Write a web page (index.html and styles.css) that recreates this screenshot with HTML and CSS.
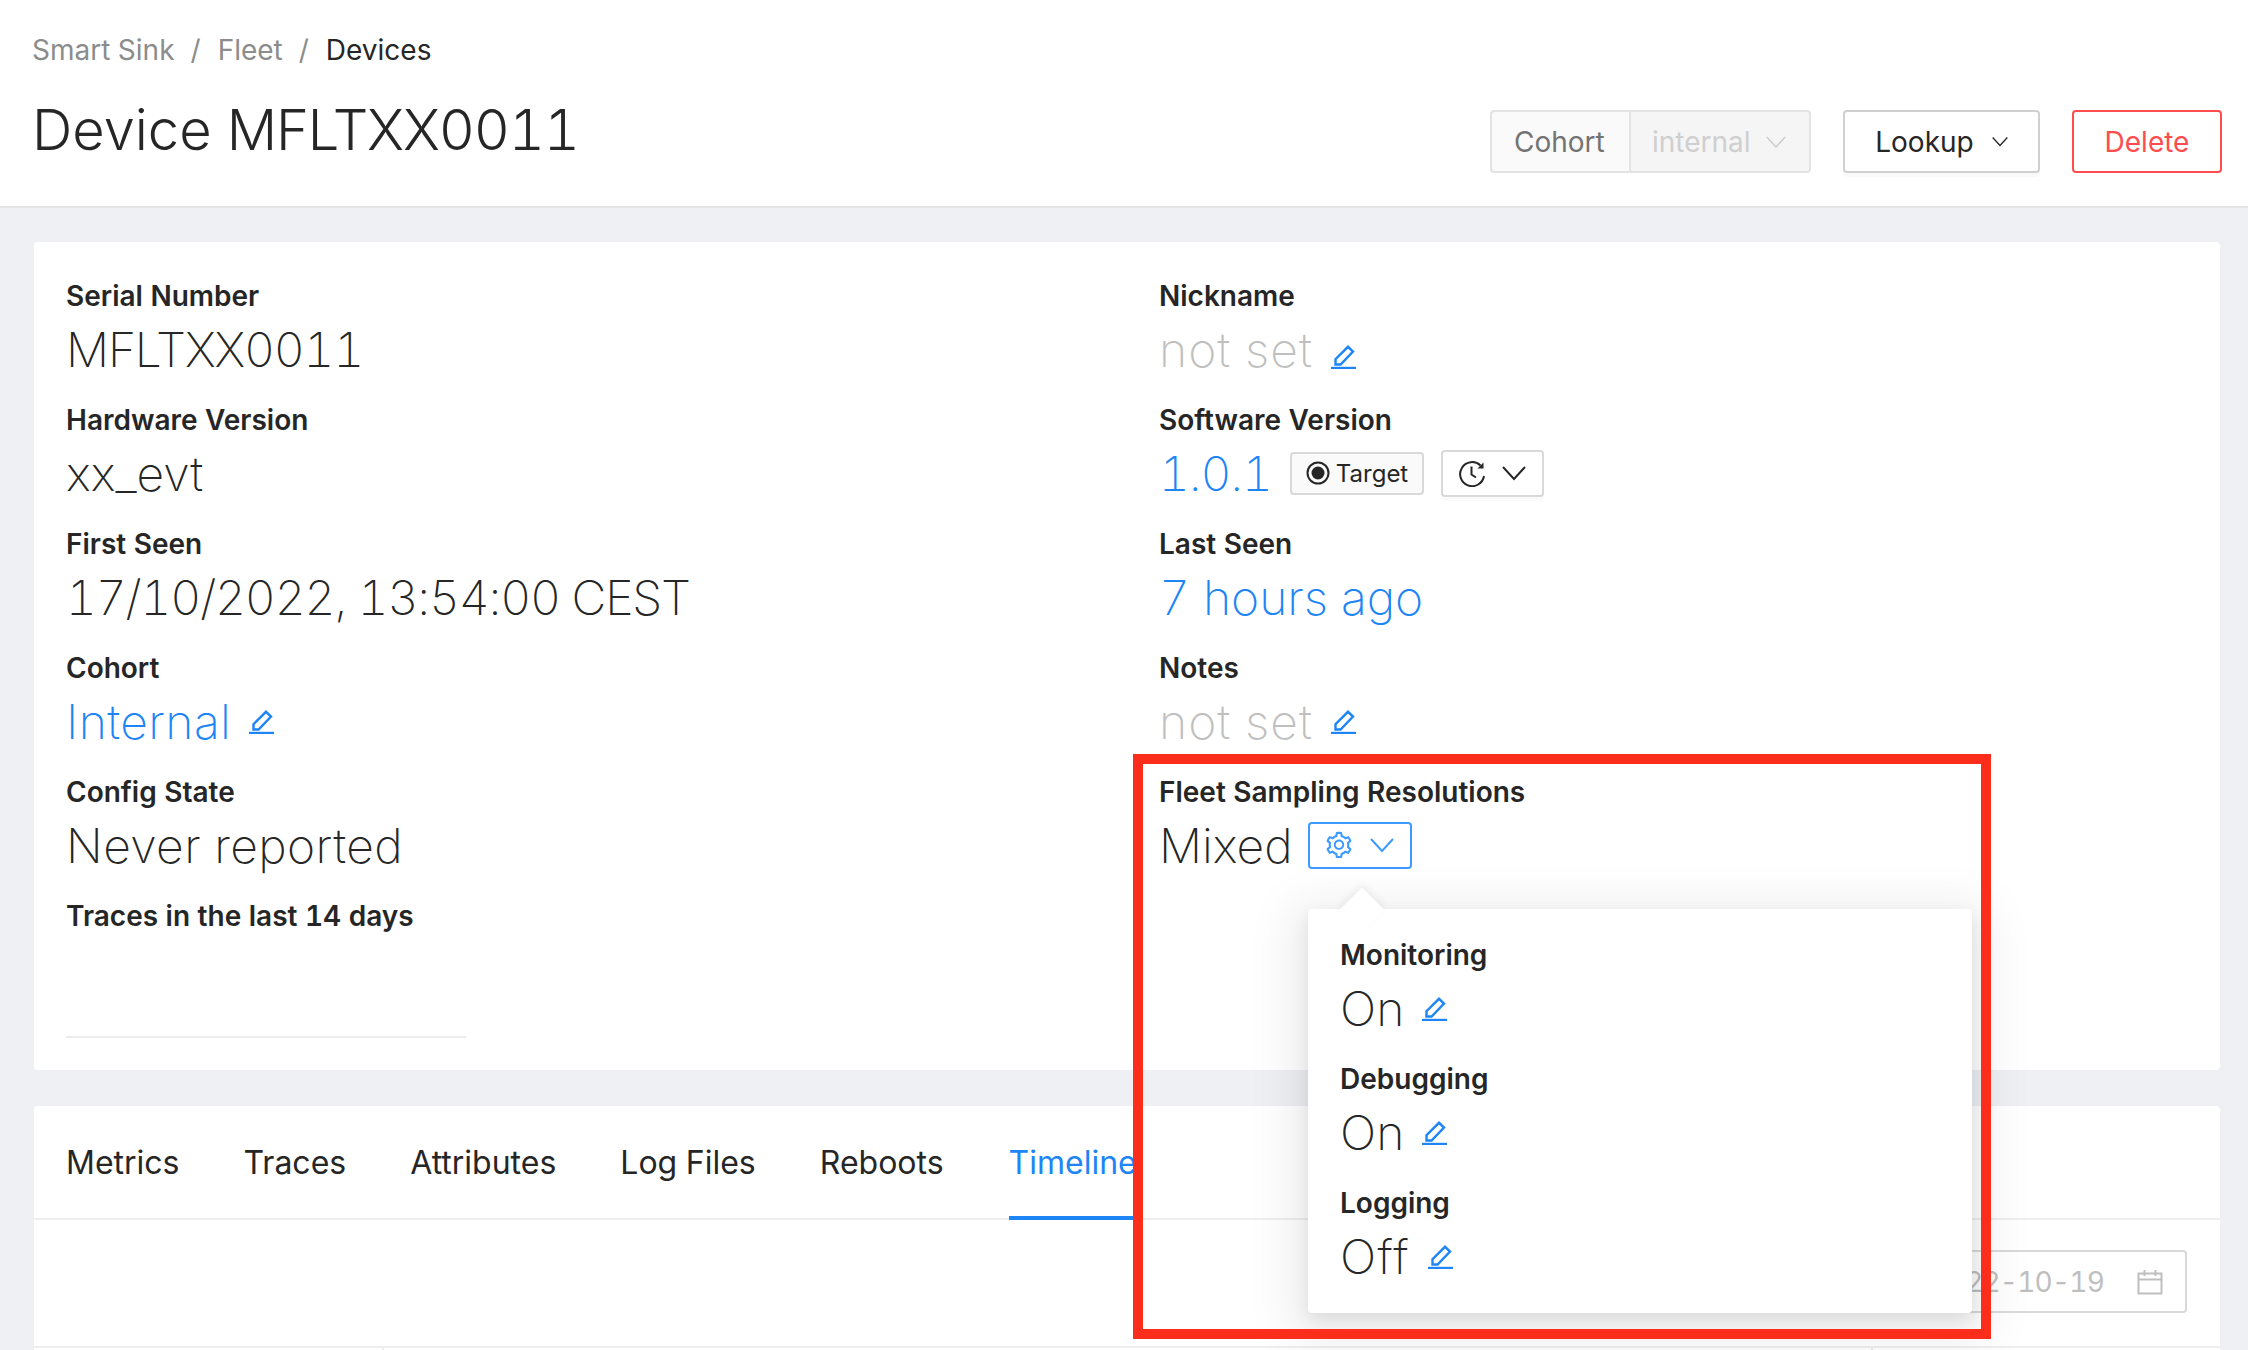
FILE: index.html
```html
<!DOCTYPE html>
<html lang="en">
<head>
    <meta charset="UTF-8">
    <title>Device MFLTXX0011</title>
    <link rel="stylesheet" href="styles.css">
</head>
<body>
    <svg class="icon-defs" width="0" height="0">
        <symbol id="edit" viewBox="0 0 25 24">
            <path d="M4.5 19.5V14.2L17 1.8l5 4.8-12.400 12.900z" fill="none" stroke="currentColor" stroke-width="2.400"/>
            <path d="M0 23h25" fill="none" stroke="currentColor" stroke-width="2.400"/>
        </symbol>
        <symbol id="chevron" viewBox="0 0 24 16">
            <path d="M1 2l11 12L23 2" fill="none" stroke="currentColor" stroke-width="2"/>
        </symbol>
    </svg>

    <header class="page-header">
        <div class="header-left">
            <nav class="breadcrumb">
                <span>Smart Sink</span><i>/</i><span>Fleet</span><i>/</i><span class="current">Devices</span>
            </nav>
            <h1>Device <span class="num">MFLTXX0011</span></h1>
        </div>
        <div class="header-actions">
            <div class="cohort-select">
                <span class="addon">Cohort</span>
                <span class="select-value"><span>internal</span><svg class="chev"><use href="#chevron"/></svg></span>
            </div>
            <button class="btn lookup"><span>Lookup</span><svg class="chev small"><use href="#chevron"/></svg></button>
            <button class="btn delete">Delete</button>
        </div>
    </header>

    <main class="content">
        <section class="card details">
            <div class="field">
                <div class="label">Serial Number</div>
                <div class="value num">MFLTXX0011</div>
            </div>
            <div class="field">
                <div class="label">Nickname</div>
                <div class="value muted"><span>not set</span><svg class="edit low"><use href="#edit"/></svg></div>
            </div>
            <div class="field">
                <div class="label">Hardware Version</div>
                <div class="value">xx_evt</div>
            </div>
            <div class="field">
                <div class="label">Software Version</div>
                <div class="value link"><span class="num">1.0.1</span>
                    <span class="target-tag">
                        <svg width="24" height="24" viewBox="0 0 24 24"><circle cx="12" cy="12" r="10.500" fill="none" stroke="currentColor" stroke-width="2"/><circle cx="12" cy="12" r="6.500" fill="currentColor"/></svg>
                        <span>Target</span>
                    </span>
                    <span class="history-btn">
                        <svg width="28" height="28" viewBox="0 0 28 28"><path d="M22.500 6.500A12 12 0 1 0 26 17" fill="none" stroke="currentColor" stroke-width="2"/><path d="M25.500 3.500v6h-6z" fill="currentColor"/><path d="M13.500 7.500v8l4.500 3" fill="none" stroke="currentColor" stroke-width="2"/></svg>
                        <svg class="chev"><use href="#chevron"/></svg>
                    </span>
                </div>
            </div>
            <div class="field">
                <div class="label">First Seen</div>
                <div class="value num">17/10/2022, 13:54:00 CEST</div>
            </div>
            <div class="field">
                <div class="label">Last Seen</div>
                <div class="value link">7 hours ago</div>
            </div>
            <div class="field">
                <div class="label">Cohort</div>
                <div class="value link wide"><span>Internal</span><svg class="edit"><use href="#edit"/></svg></div>
            </div>
            <div class="field">
                <div class="label">Notes</div>
                <div class="value muted"><span>not set</span><svg class="edit"><use href="#edit"/></svg></div>
            </div>
            <div class="field">
                <div class="label">Config State</div>
                <div class="value wide">Never reported</div>
            </div>
            <div class="field">
                <div class="label">Fleet Sampling Resolutions</div>
                <div class="value"><span>Mixed</span>
                    <span class="sampling-btn">
                        <svg width="30" height="30" viewBox="0 0 1024 1024"><path fill="currentColor" d="M924.8 625.7l-65.5-56c3.100-19 4.700-38.400 4.700-57.800s-1.600-38.800-4.700-57.800l65.500-56a32.030 32.030 0 0 0 9.300-35.200l-.9-2.600a443.740 443.740 0 0 0-79.700-137.900l-1.800-2.100a32.120 32.120 0 0 0-35.100-9.500l-81.300 28.900c-30-24.600-63.500-44-99.700-57.600l-15.700-85a32.050 32.050 0 0 0-25.800-25.700l-2.700-.5c-52.100-9.400-106.900-9.400-159 0l-2.700.5a32.050 32.050 0 0 0-25.800 25.700l-15.800 85.400a351.860 351.860 0 0 0-99 57.400l-81.900-29.100a32 32 0 0 0-35.100 9.500l-1.800 2.100a446.020 446.020 0 0 0-79.700 137.900l-.9 2.600c-4.500 12.500-.8 26.500 9.300 35.200l66.300 56.600c-3.100 18.800-4.600 38-4.600 57.100 0 19.200 1.500 38.400 4.600 57.100L99 625.500a32.030 32.030 0 0 0-9.300 35.200l.9 2.600c18.100 50.400 44.900 96.900 79.700 137.900l1.800 2.100a32.120 32.120 0 0 0 35.100 9.500l81.900-29.100c29.800 24.500 63.100 43.900 99 57.400l15.800 85.400a32.050 32.050 0 0 0 25.800 25.700l2.700.5a449.400 449.400 0 0 0 159 0l2.700-.5a32.050 32.050 0 0 0 25.800-25.700l15.700-85a350 350 0 0 0 99.700-57.600l81.300 28.900a32 32 0 0 0 35.100-9.500l1.800-2.100c34.800-41.100 61.600-87.500 79.700-137.900l.9-2.600c4.500-12.300.8-26.300-9.300-35zM788.300 465.900c2.500 15.100 3.800 30.600 3.800 46.100s-1.300 31-3.800 46.100l-6.600 40.100 74.700 63.900a370.030 370.030 0 0 1-42.600 73.600L721 702.800l-31.400 25.800c-23.900 19.600-50.500 35-79.300 45.800l-38.100 14.300-17.900 97a377.500 377.500 0 0 1-85 0l-17.900-97.200-37.800-14.500c-28.500-10.800-55-26.200-78.700-45.700l-31.400-25.900-93.400 33.200c-17-22.900-31.200-47.600-42.600-73.600l75.500-64.500-6.500-40c-2.400-14.900-3.700-30.300-3.700-45.500 0-15.300 1.200-30.600 3.700-45.500l6.500-40-75.500-64.500c11.300-26.100 25.600-50.700 42.600-73.600l93.400 33.200 31.400-25.900c23.700-19.500 50.200-34.900 78.700-45.700l37.900-14.300 17.900-97.200c28.100-3.200 56.800-3.200 85 0l17.900 97 38.100 14.300c28.700 10.800 55.400 26.200 79.300 45.800l31.400 25.800 92.800-32.900c17 22.900 31.200 47.600 42.600 73.600L781.800 426l6.500 39.900zM512 326c-97.200 0-176 78.800-176 176s78.800 176 176 176 176-78.800 176-176-78.800-176-176-176zm79.200 255.200A111.600 111.600 0 0 1 512 614c-29.900 0-58-11.700-79.200-32.800A111.600 111.600 0 0 1 400 502c0-29.900 11.700-58 32.800-79.200C454 401.600 482.100 390 512 390c29.900 0 58 11.600 79.200 32.800A111.600 111.600 0 0 1 624 502c0 29.900-11.700 58-32.800 79.200z"/></svg>
                        <svg class="chev"><use href="#chevron"/></svg>
                    </span>
                </div>
            </div>
            <div class="field">
                <div class="label">Traces in the last 14 days</div>
                <div class="sparkline"></div>
            </div>
        </section>

        <section class="card tabs-card">
            <div class="tabs">
                <span>Metrics</span>
                <span>Traces</span>
                <span>Attributes</span>
                <span>Log Files</span>
                <span>Reboots</span>
                <span class="active">Timeline</span>
            </div>
            <div class="toolbar">
                <div class="date-picker">
                    <span>2022-10-19</span>
                    <svg width="26" height="26" viewBox="0 0 26 26"><path d="M1.500 4.500h23v20h-23zM1.500 10.500h23M7.500 1v6M18.500 1v6" fill="none" stroke="currentColor" stroke-width="2"/></svg>
                </div>
            </div>
            <div class="table-head">
                <div></div>
                <div></div>
                <div></div>
            </div>
        </section>
    </main>

    <!-- dropdown opened from the gear button -->
    <div class="popover">
        <div class="pop-field">
            <div class="label">Monitoring</div>
            <div class="value"><span>On</span><svg class="edit"><use href="#edit"/></svg></div>
        </div>
        <div class="pop-field">
            <div class="label">Debugging</div>
            <div class="value"><span>On</span><svg class="edit"><use href="#edit"/></svg></div>
        </div>
        <div class="pop-field">
            <div class="label">Logging</div>
            <div class="value wide-off"><span>Off</span><svg class="edit"><use href="#edit"/></svg></div>
        </div>
    </div>

    <!-- red annotation frame -->
    <div class="highlight"></div>
</body>
</html>
```

FILE: styles.css
```css
* {
    box-sizing: border-box;
}

html, body {
    height: 100%;
}

body {
    position: relative;
    margin: 0;
    overflow: hidden;
    font-family: Inter, "Liberation Sans", sans-serif;
    font-size: 28px;
    font-variant-numeric: tabular-nums;
    color: #262626;
    background-color: #eef0f3;
}

.icon-defs {
    position: absolute;
}

/* Page header */
.page-header {
    display: flex;
    justify-content: space-between;
    height: 208px;
    padding: 0 26px 0 32px;
    background-color: white;
    border-bottom: 2px solid #e6e6e8;
}

.breadcrumb {
    display: flex;
    height: 44px;
    margin-top: 28px;
    line-height: 44px;
    color: #8c8c8c;
}

.breadcrumb i {
    margin: 0 17px 0 16px;
    font-style: normal;
}

.breadcrumb .current {
    color: #262626;
}

h1 {
    margin: 20px 0 0 0;
    font-size: 56px;
    font-weight: 300;
    line-height: 76px;
}

.header-actions {
    display: flex;
    gap: 32px;
    margin-top: 110px;
    height: 63px;
}

.cohort-select {
    display: flex;
}

.addon {
    display: flex;
    align-items: center;
    width: 139px;
    padding-left: 22px;
    color: #737373;
    background-color: #fafafa;
    border: 2px solid #e3e3e3;
    border-right: none;
    border-radius: 4px 0 0 4px;
}

.select-value {
    display: flex;
    align-items: center;
    justify-content: space-between;
    width: 182px;
    padding: 0 23px 0 21px;
    color: #cfcfcf;
    background-color: #f5f5f5;
    border: 2px solid #e3e3e3;
    border-radius: 0 4px 4px 0;
}

.chev {
    width: 20px;
    height: 14px;
}

.chev.small {
    width: 16px;
    height: 11px;
}

.btn {
    display: flex;
    align-items: center;
    justify-content: center;
    font-family: inherit;
    font-size: 28px;
    background-color: white;
    border-radius: 4px;
    border: 2px solid #d0d0d0;
}

.lookup {
    gap: 18px;
    width: 197px;
    color: #262626;
    box-shadow: 0 4px 0 rgba(0, 0, 0, 0.02);
}

.delete {
    width: 150px;
    color: #ff4d4f;
    border-color: #ff4d4f;
}

/* Cards */
.content {
    display: flex;
    flex-direction: column;
    gap: 36px;
    padding: 34px 28px 0 34px;
}

.card {
    background-color: white;
    border-radius: 4px;
}

.details {
    display: grid;
    grid-template-columns: 1093px 1fr;
    grid-auto-rows: 124px;
    height: 828px;
    padding: 32px;
}

.label {
    font-weight: 600;
    line-height: 44px;
}

.value {
    display: flex;
    align-items: center;
    height: 62px;
    font-size: 48px;
    font-weight: 200;
    white-space: nowrap;
}

/* digits came out wider than the reference */
.num {
    letter-spacing: -1.2px;
}

.wide {
    letter-spacing: 0.4px;
}

.wide-off {
    letter-spacing: 1.4px;
}

.muted {
    color: #bfbfbf;
    letter-spacing: 1px;
}

.link {
    color: #1d85f5;
}

.edit {
    flex: none;
    width: 25px;
    height: 24px;
    margin: 2px 0 0 18px;
    color: #1d85f5;
}

.edit.low {
    margin-top: 15px;
}

.target-tag {
    display: flex;
    align-items: center;
    gap: 6px;
    height: 43px;
    margin-left: 18px;
    padding: 0 14px;
    font-size: 24px;
    font-weight: 400;
    letter-spacing: 0;
    color: #262626;
    background-color: #fafafa;
    border: 2px solid #d9d9d9;
    border-radius: 4px;
}

.history-btn, .sampling-btn {
    display: flex;
    align-items: center;
    justify-content: space-between;
    width: 103px;
    height: 47px;
    padding: 0 16px;
    border: 2px solid #d9d9d9;
    border-radius: 4px;
}

.history-btn {
    margin-left: 17px;
    padding-left: 15px;
    color: #262626;
    box-shadow: 0 4px 0 rgba(0, 0, 0, 0.02);
}

.sampling-btn {
    width: 104px;
    margin-left: 15px;
    padding-left: 14px;
    color: #3d9bff;
    border-color: #3d9bff;
}

.history-btn .chev, .sampling-btn .chev {
    width: 24px;
    height: 16px;
}

.sparkline {
    width: 400px;
    height: 100px;
    border-bottom: 2px solid #ececec;
}

/* Tabs area */
.tabs {
    display: flex;
    align-items: flex-start;
    gap: 64px;
    height: 114px;
    padding: 0 32px;
    font-size: 32px;
    border-bottom: 2px solid #eeeeee;
}

.tabs span {
    line-height: 114px;
}

.tabs .active {
    margin-left: 1px;
    height: 114px;
    color: #1d85f5;
    border-bottom: 4px solid #1d85f5;
}

.toolbar {
    display: flex;
    justify-content: flex-end;
    padding: 30px 33px 0 0;
}

.date-picker {
    display: flex;
    align-items: center;
    justify-content: flex-end;
    gap: 33px;
    width: 533px;
    height: 63px;
    padding-right: 22px;
    color: #bfbfbf;
    letter-spacing: -0.8px;
    border: 2px solid #d9d9d9;
    border-radius: 4px;
}

.table-head {
    display: grid;
    grid-template-columns: 348px 1489px 1fr;
    height: 40px;
    margin-top: 33px;
    border-top: 2px solid #eeeeee;
}

.table-head div + div {
    border-left: 2px solid #eeeeee;
}

/* Overlays */
.popover {
    position: absolute;
    left: 1308px;
    top: 909px;
    width: 664px;
    height: 404px;
    padding: 24px 32px;
    background-color: white;
    border-radius: 4px;
    box-shadow: 0 12px 48px 16px rgba(0, 0, 0, 0.08), 0 6px 16px rgba(0, 0, 0, 0.08);
}

.popover::before {
    content: "";
    position: absolute;
    left: 38px;
    top: -15px;
    width: 32px;
    height: 32px;
    background-color: white;
    transform: rotate(45deg);
    border-radius: 2px;
    box-shadow: -3px -3px 7px rgba(0, 0, 0, 0.05);
}

.pop-field {
    height: 124px;
}

.highlight {
    position: absolute;
    left: 1133px;
    top: 754px;
    width: 858px;
    height: 585px;
    border: 10px solid #fd2d1c;
}
```
